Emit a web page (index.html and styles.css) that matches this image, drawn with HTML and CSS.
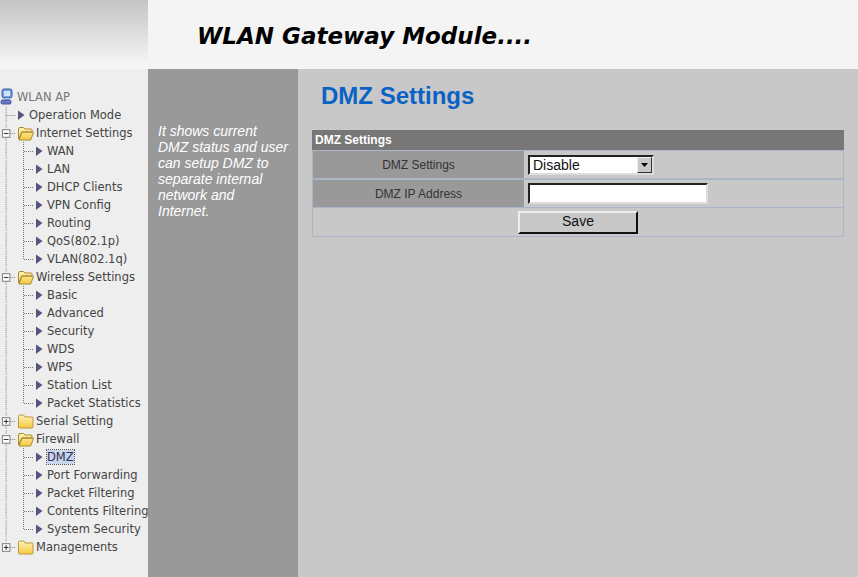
FILE: index.html
```html
<!DOCTYPE html>
<html lang="en">
<head>
<meta charset="utf-8">
<title>DMZ Settings</title>
<link rel="stylesheet" href="styles.css">
</head>
<body>
<svg class="defs" width="0" height="0" aria-hidden="true">
  <defs>
    <linearGradient id="fold" x1="0" y1="0" x2="0" y2="1"><stop offset="0" stop-color="#fff3b8"/><stop offset="1" stop-color="#f4c93f"/></linearGradient>
    <symbol id="arrow" viewBox="0 0 8 18"><path d="M1 4.5 7.5 9 1 14z" fill="#55557f"/></symbol>
    <symbol id="v" viewBox="0 0 18 18"><path d="M6.5 0V18" stroke="#777" stroke-dasharray="1 1" fill="none"/></symbol>
    <symbol id="t" viewBox="0 0 18 18"><path d="M6.5 0V18M7 9.5H17" stroke="#777" stroke-dasharray="1 1" fill="none"/></symbol>
    <symbol id="l" viewBox="0 0 18 18"><path d="M6.5 0V9.5M7 9.5H17" stroke="#777" stroke-dasharray="1 1" fill="none"/></symbol>
    <symbol id="minus" viewBox="0 0 18 18"><path d="M6.5 0V4M6.5 14V18M11 9.5H17" stroke="#777" stroke-dasharray="1 1" fill="none"/><rect x="2.5" y="5.5" width="8" height="8" fill="#fff" stroke="#777"/><path d="M4 9.5H9" stroke="#222"/></symbol>
    <symbol id="plus" viewBox="0 0 18 18"><path d="M6.5 0V4M6.5 14V18M11 9.5H17" stroke="#777" stroke-dasharray="1 1" fill="none"/><rect x="2.5" y="5.5" width="8" height="8" fill="#fff" stroke="#777"/><path d="M4 9.5H9M6.5 7V12" stroke="#222"/></symbol>
    <symbol id="plusend" viewBox="0 0 18 18"><path d="M6.5 0V4M11 9.5H17" stroke="#777" stroke-dasharray="1 1" fill="none"/><rect x="2.5" y="5.5" width="8" height="8" fill="#fff" stroke="#777"/><path d="M4 9.5H9M6.5 7V12" stroke="#222"/></symbol>
    <symbol id="closed" viewBox="0 0 18 18"><path d="M1.5 6V15q0 1 1 1H15q1 0 1-1V6q0-1-1-1H8L6.5 3H3q-1.500 0-1.500 1.500z" fill="url(#fold)" stroke="#b9983c"/></symbol>
    <symbol id="open" viewBox="0 0 18 18"><path d="M1.500 15V5q0-1.500 1.500-1.500h3.500L8 5h6q1 0 1 1v2H5L1.500 15zM5 8h11.500L14 15.500q-.3.500-1 .5H2z" fill="url(#fold)" stroke="#a88a30"/></symbol>
    <symbol id="pc" viewBox="0 0 14 18"><rect x="2" y="1" width="10" height="9" rx="2" fill="#6f9fe0" stroke="#3d5fa5"/><rect x="4" y="3" width="6" height="5" fill="#cfe4fb"/><path d="M5 10v3h4v-3z" fill="#b8c6de"/><rect x="1" y="12" width="10" height="4" rx="1.500" fill="#6a78c8" stroke="#44509a"/></symbol>
  </defs>
</svg>
<header class="top">
  <div class="brand"></div>
  <div class="banner"><h1 class="product">WLAN Gateway Module....</h1></div>
</header>
<div class="layout">
  <nav class="tree">
    <div class="node root"><svg class="i14"><use href="#pc"/></svg><span class="label gray">WLAN AP</span></div>
    <div class="node"><svg class="j"><use href="#t"/></svg><svg class="a"><use href="#arrow"/></svg><span class="label">Operation Mode</span></div>
    <div class="node"><svg class="j"><use href="#minus"/></svg><svg class="f"><use href="#open"/></svg><span class="label">Internet Settings</span></div>
    <div class="node"><svg class="j"><use href="#v"/></svg><svg class="j"><use href="#t"/></svg><svg class="a"><use href="#arrow"/></svg><span class="label">WAN</span></div>
    <div class="node"><svg class="j"><use href="#v"/></svg><svg class="j"><use href="#t"/></svg><svg class="a"><use href="#arrow"/></svg><span class="label">LAN</span></div>
    <div class="node"><svg class="j"><use href="#v"/></svg><svg class="j"><use href="#t"/></svg><svg class="a"><use href="#arrow"/></svg><span class="label">DHCP Clients</span></div>
    <div class="node"><svg class="j"><use href="#v"/></svg><svg class="j"><use href="#t"/></svg><svg class="a"><use href="#arrow"/></svg><span class="label">VPN Config</span></div>
    <div class="node"><svg class="j"><use href="#v"/></svg><svg class="j"><use href="#t"/></svg><svg class="a"><use href="#arrow"/></svg><span class="label">Routing</span></div>
    <div class="node"><svg class="j"><use href="#v"/></svg><svg class="j"><use href="#t"/></svg><svg class="a"><use href="#arrow"/></svg><span class="label">QoS(802.1p)</span></div>
    <div class="node"><svg class="j"><use href="#v"/></svg><svg class="j"><use href="#l"/></svg><svg class="a"><use href="#arrow"/></svg><span class="label">VLAN(802.1q)</span></div>
    <div class="node"><svg class="j"><use href="#minus"/></svg><svg class="f"><use href="#open"/></svg><span class="label">Wireless Settings</span></div>
    <div class="node"><svg class="j"><use href="#v"/></svg><svg class="j"><use href="#t"/></svg><svg class="a"><use href="#arrow"/></svg><span class="label">Basic</span></div>
    <div class="node"><svg class="j"><use href="#v"/></svg><svg class="j"><use href="#t"/></svg><svg class="a"><use href="#arrow"/></svg><span class="label">Advanced</span></div>
    <div class="node"><svg class="j"><use href="#v"/></svg><svg class="j"><use href="#t"/></svg><svg class="a"><use href="#arrow"/></svg><span class="label">Security</span></div>
    <div class="node"><svg class="j"><use href="#v"/></svg><svg class="j"><use href="#t"/></svg><svg class="a"><use href="#arrow"/></svg><span class="label">WDS</span></div>
    <div class="node"><svg class="j"><use href="#v"/></svg><svg class="j"><use href="#t"/></svg><svg class="a"><use href="#arrow"/></svg><span class="label">WPS</span></div>
    <div class="node"><svg class="j"><use href="#v"/></svg><svg class="j"><use href="#t"/></svg><svg class="a"><use href="#arrow"/></svg><span class="label">Station List</span></div>
    <div class="node"><svg class="j"><use href="#v"/></svg><svg class="j"><use href="#l"/></svg><svg class="a"><use href="#arrow"/></svg><span class="label">Packet Statistics</span></div>
    <div class="node"><svg class="j"><use href="#plus"/></svg><svg class="f"><use href="#closed"/></svg><span class="label">Serial Setting</span></div>
    <div class="node"><svg class="j"><use href="#minus"/></svg><svg class="f"><use href="#open"/></svg><span class="label">Firewall</span></div>
    <div class="node"><svg class="j"><use href="#v"/></svg><svg class="j"><use href="#t"/></svg><svg class="a"><use href="#arrow"/></svg><span class="label current">DMZ</span></div>
    <div class="node"><svg class="j"><use href="#v"/></svg><svg class="j"><use href="#t"/></svg><svg class="a"><use href="#arrow"/></svg><span class="label">Port Forwarding</span></div>
    <div class="node"><svg class="j"><use href="#v"/></svg><svg class="j"><use href="#t"/></svg><svg class="a"><use href="#arrow"/></svg><span class="label">Packet Filtering</span></div>
    <div class="node"><svg class="j"><use href="#v"/></svg><svg class="j"><use href="#t"/></svg><svg class="a"><use href="#arrow"/></svg><span class="label">Contents Filtering</span></div>
    <div class="node"><svg class="j"><use href="#v"/></svg><svg class="j"><use href="#l"/></svg><svg class="a"><use href="#arrow"/></svg><span class="label">System Security</span></div>
    <div class="node"><svg class="j"><use href="#plusend"/></svg><svg class="f"><use href="#closed"/></svg><span class="label">Managements</span></div>
  </nav>
  <aside class="help">It shows current DMZ status and user can setup DMZ to separate internal network and Internet.</aside>
  <main class="content">
    <h2 class="title">DMZ Settings</h2>
    <div class="panel">
      <div class="panel-head">DMZ Settings</div>
      <div class="row">
        <div class="name">DMZ Settings</div>
        <div class="value"><div class="select"><span class="select-text">Disable</span><span class="select-btn"><svg width="7" height="4" viewBox="0 0 7 4"><path d="M0 0H7L3.500 4z" fill="#000"/></svg></span></div></div>
      </div>
      <div class="row tall">
        <div class="name">DMZ IP Address</div>
        <div class="value"><div class="input"></div></div>
      </div>
      <div class="actions"><button class="save" type="button">Save</button></div>
    </div>
  </main>
</div>
</body>
</html>
```
FILE: styles.css
```css
* { box-sizing: border-box; }
html, body { margin: 0; height: 100%; }
body { width: 858px; height: 577px; overflow: hidden; display: flex; flex-direction: column; font-family: "Liberation Sans", Arial, sans-serif; background: #c8c8c8; }
.defs { position: absolute; }
.top { height: 69px; display: flex; flex: none; background: #f4f4f4; }
.brand { width: 148px; background: linear-gradient(#c4c4c4, #f6f6f6 95%); }
.banner { flex: 1; padding: 21px 0 0 49px; }
.product { margin: 0; font: italic bold 23px/30px "DejaVu Sans", Verdana, sans-serif; color: #000; white-space: nowrap; }
.layout { flex: 1; display: flex; min-height: 0; }
.tree { width: 148px; flex: none; background: #eeeeee; padding-top: 19px; overflow: hidden; font: 11.5px "DejaVu Sans", Verdana, sans-serif; color: #444; }
.node { height: 18px; display: flex; align-items: center; white-space: nowrap; }
.node svg { flex: none; height: 18px; display: block; }
.j { width: 17px; margin-right: 0; }
.j + .j { width: 18px; }
.a { width: 8px; margin-right: 4px; }
.f { width: 18px; margin-right: 1px; }
.i14 { width: 14px; margin-right: 3px; }
.label { line-height: 14px; }
.gray { color: #777; }
.current { background: #c9d6ec; outline: 1px dotted #556; color: #335; }
.help { width: 150px; flex: none; background: #999999; color: #fff; padding: 54px 10px 0; font: italic 14px/16px "Liberation Sans", Arial, sans-serif; }
.content { flex: 1; padding: 0 14px 0 14px; }
.title { margin: 12px 0 19px 9px; font: bold 24px/30px "Liberation Sans", Arial, sans-serif; color: #0a62c4; }
.panel { width: 532px; font-size: 12px; }
.panel-head { height: 20px; background: #777777; color: #fff; font-weight: bold; line-height: 20px; padding-left: 3px; }
.row { height: 29px; display: flex; border: 1px solid #aab6c6; border-top-width: 1px; margin-top: 0; }
.tall { height: 29px; }
.name { width: 212px; background: #999999; color: #333; display: flex; align-items: center; justify-content: center; padding-bottom: 0; border-right: 1px solid #c8d0dc; }
.value { flex: 1; display: flex; align-items: center; padding-left: 3px; background: #c8c8c8; }
.select { width: 126px; height: 20px; background: #fff; border: 2px solid; border-color: #222 #ddd #ddd #222; display: flex; align-items: center; font-size: 14px; color: #111; }
.select-text { flex: 1; padding-left: 3px; }
.select-btn { width: 15px; height: 16px; background: #c8c8c8; border: 1px solid; border-color: #eee #333 #333 #eee; display: flex; align-items: center; justify-content: center; }
.input { width: 180px; height: 21px; background: #fff; border: 2px solid; border-color: #222 #ddd #ddd #222; }
.actions { height: 29px; display: flex; justify-content: center; align-items: center; border: 1px solid #aab6c6; border-top: 0; }
.save { width: 120px; height: 23px; padding: 0 0 2px; background: #c8c8c8; border: 2px solid; border-color: #eee #111 #111 #eee; font: 14px "Liberation Sans", Arial, sans-serif; color: #111; }
```
